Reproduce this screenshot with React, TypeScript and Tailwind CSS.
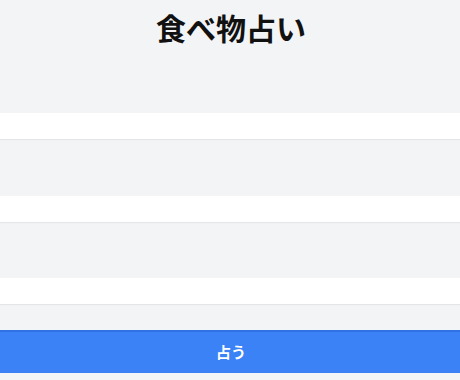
export default function App() {
  return (
    <div
      className="min-h-screen bg-[#f3f4f6]"
      style={{ fontFamily: '"Noto Sans CJK JP", "Noto Sans", sans-serif' }}
    >
      <h1 className="pt-[9px] pl-[2px] text-center text-[30px] leading-9 font-bold text-[#111111]">食べ物占い</h1>

      <form className="mt-[68px] flex flex-col" onSubmit={(e) => e.preventDefault()}>
        <div className="h-[26px] bg-white shadow-[0_1px_1px_rgba(0,0,0,0.06)]" />
        <div className="mt-[57px] h-[26px] bg-white shadow-[0_1px_1px_rgba(0,0,0,0.06)]" />
        <div className="mt-[56px] h-[26px] bg-white shadow-[0_1px_1px_rgba(0,0,0,0.06)]" />
        <button
          type="submit"
          className="mt-[26px] h-[43px] border-t-2 border-[#2f72e6] bg-[#3b82f6] pl-[2px] text-[15px] font-bold text-white"
        >
          占う
        </button>
      </form>
    </div>
  );
}
